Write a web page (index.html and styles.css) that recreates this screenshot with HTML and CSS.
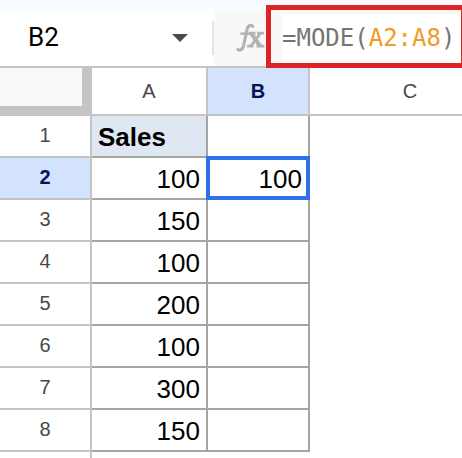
FILE: index.html
```html
<!DOCTYPE html>
<html lang="en">
<head>
<meta charset="utf-8">
<title>Sales sheet</title>
<link rel="stylesheet" href="styles.css">
</head>
<body>
<header class="bar">
  <div class="name-box">
    <input class="name-input" type="text" value="B2" aria-label="Name box">
    <button class="name-menu" type="button" aria-label="Named ranges">
      <svg width="16" height="8" viewBox="0 0 16 8"><path d="M0 0h16L8 8z" fill="#4f4848"/></svg>
    </button>
  </div>
  <div class="fx">
    <svg width="30" height="30" viewBox="0 0 30 30" fill="none" stroke="#b3b3b3" aria-label="Function" role="img">
      <path d="M18 4.500C17.500 1.500 13.500 1.300 12.300 5.500L8.600 22.500C7.600 27.500 4 28.500 2.200 25.500" stroke-width="3.200"/>
      <path d="M5.500 10.700H17" stroke-width="2.500"/>
      <path d="M16.500 11L25.500 23.500" stroke-width="4"/>
      <path d="M25 11L15.500 23.500" stroke-width="2.800"/>
      <path d="M14 10.200H20.500M22 10.200H29M12 23.200H18.500M21.500 23.200H29.500" stroke-width="2.800"/>
    </svg>
  </div>
  <div class="formula">
    <div class="formula-input" role="textbox" contenteditable="true" spellcheck="false" aria-label="Formula">=MODE(<span class="range">A2:A8</span>)</div>
  </div>
</header>
<main>
<table class="sheet">
  <colgroup><col class="col-num"><col class="col-a"><col class="col-b"><col></colgroup>
  <thead>
    <tr><td class="corner"></td><th scope="col">A</th><th scope="col" class="active">B</th><th scope="col" class="last">C</th></tr>
  </thead>
  <tbody>
    <tr><th scope="row">1</th><td class="title">Sales</td><td></td><td class="blank"></td></tr>
    <tr><th scope="row" class="active">2</th><td>100</td><td class="selected">100</td><td class="blank"></td></tr>
    <tr><th scope="row">3</th><td>150</td><td></td><td class="blank"></td></tr>
    <tr><th scope="row">4</th><td>100</td><td></td><td class="blank"></td></tr>
    <tr><th scope="row">5</th><td>200</td><td></td><td class="blank"></td></tr>
    <tr><th scope="row">6</th><td>100</td><td></td><td class="blank"></td></tr>
    <tr><th scope="row">7</th><td>300</td><td></td><td class="blank"></td></tr>
    <tr><th scope="row">8</th><td>150</td><td></td><td class="blank"></td></tr>
  </tbody>
</table>
<div class="rest"></div>
</main>
</body>
</html>
```
FILE: styles.css
```css
* { box-sizing: border-box; }

body {
  display: flex;
  flex-direction: column;
  min-height: 100vh;
  margin: 0;
  background: #fff;
  font-family: "Liberation Sans", Arial, sans-serif;
  color: #000;
}

main {
  display: flex;
  flex-direction: column;
  flex: 1;
}

.bar {
  display: flex;
  height: 68px;
  border-top: 10px solid #f8fbff;
  border-bottom: 2px solid #c4c4c4;
}

.name-box {
  display: flex;
  align-items: center;
  width: 214px;
  padding: 0 0 0 28px;
  background: linear-gradient(#dce5f2, #dce5f2) right center / 2px 34px no-repeat;
}

.name-input {
  flex: 1;
  min-width: 0;
  height: 40px;
  padding: 0 0 2px;
  border: 0;
  outline: 0;
  background: none;
  font: 26px/38px Roboto, sans-serif;
  color: #000;
}

.name-menu {
  display: flex;
  padding: 4px 26px 4px 8px;
  border: 0;
  background: none;
}

.fx {
  width: 52px;
  padding: 13px 0 0 21px;
  background: #f8f8f8;
}

.formula {
  flex: 1;
  margin: -5px 0 -2px;
  padding: 4px 0 0 11px;
  border: 5px solid #dd2323;
  border-right-width: 1px;
  background: #f8f8f8;
}

.formula-input {
  height: 100%;
  background: #fff;
  font: 24px/48px "DejaVu Sans Mono", monospace;
  white-space: nowrap;
  color: #757575;
}

.range { color: #f29a26; }

.sheet {
  width: 100%;
  table-layout: fixed;
  border-spacing: 0;
}

.col-num { width: 92px; }
.col-a { width: 116px; }
.col-b { width: 102px; }

.sheet th {
  height: 42px;
  padding: 0 0 2px;
  border: solid #c4c4c4;
  border-width: 0 2px 2px 0;
  font-size: 20px;
  line-height: 24px;
  font-weight: 400;
  color: #484848;
}

.sheet thead th {
  height: 48px;
  padding-bottom: 0;
}

.sheet .last {
  padding-left: 48px;
  border-right: 0;
}

.sheet .active {
  background: #d3e2fd;
  font-weight: 700;
  color: #041455;
}

.sheet td {
  height: 42px;
  padding: 2px 6px 0;
  border: solid #a5a5a5;
  border-width: 0 2px 2px 0;
  font-size: 26px;
  line-height: 30px;
  text-align: right;
}

.sheet .corner {
  border-color: #c4c4c4;
  border-width: 0 10px 10px 0;
  background: #f8f9fb;
}

.sheet .title {
  background: #dfe7f2;
  font-weight: 700;
  text-align: left;
}

.sheet .blank { border: 0; }

.rest {
  flex: 1;
  width: 92px;
  border-right: 2px solid #c4c4c4;
}

.sheet .selected { position: relative; }

.selected::after {
  content: "";
  position: absolute;
  inset: -2px;
  border: 4px solid #2f71eb;
}
```
